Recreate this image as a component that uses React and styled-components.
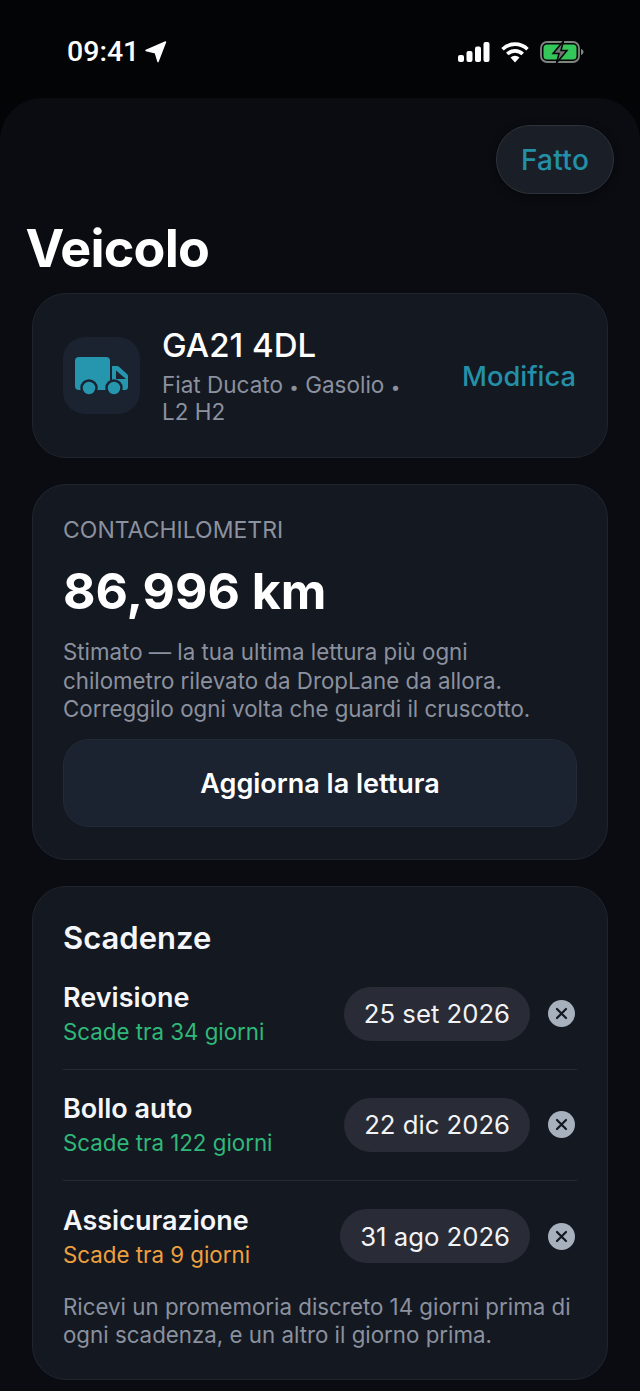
import React from "react";
import styled, { createGlobalStyle } from "styled-components";

const Global = createGlobalStyle`
  html, body { margin: 0; padding: 0; background: #030406; }
  body { font-family: Inter, "Liberation Sans", sans-serif; -webkit-font-smoothing: antialiased; }
  * { box-sizing: border-box; }
`;

const Page = styled.div`
  width: 640px;
  height: 1391px;
  overflow: hidden;
  background: #030406;
  display: flex;
  flex-direction: column;
`;

const StatusBar = styled.div`
  height: 98px;
  flex: none;
  display: flex;
  justify-content: space-between;
  align-items: flex-start;
  padding: 37px 56px 0 67px;
`;

const Clock = styled.div`
  display: flex;
  align-items: center;
  gap: 6px;
  color: #fff;
  font-family: Roboto, Inter, sans-serif;
  font-size: 28.5px;
  font-weight: 500;
  line-height: 30px;
`;

const StatusIcons = styled.div`
  display: flex;
  align-items: center;
  gap: 11px;
  height: 30px;
`;

const Sheet = styled.div`
  flex: 1;
  background: #0a0c11;
  border-radius: 42px 42px 0 0;
  padding: 27px 26px 0 26px;
`;

const TopRow = styled.div`
  display: flex;
  justify-content: flex-end;
`;

const DoneButton = styled.div`
  width: 118px;
  height: 69px;
  border-radius: 34px;
  background: #1a1e26;
  border: 1.5px solid #2e3239;
  color: #2390a8;
  font-size: 28px;
  font-weight: 500;
  letter-spacing: 0.3px;
  display: flex;
  align-items: center;
  justify-content: center;
  box-shadow: 0 2px 8px rgba(0, 0, 0, 0.4);
`;

const Title = styled.h1`
  margin: 25px 0 0 -0.5px;
  color: #fff;
  font-size: 52px;
  line-height: 60px;
  font-weight: 700;
  letter-spacing: -0.8px;
`;

const Stack = styled.div`
  margin: 14px 6px 0 6px;
  display: flex;
  flex-direction: column;
  gap: 26px;
`;

const Card = styled.section`
  background: #141821;
  border: 1.5px solid #20242d;
  border-radius: 34px;
  padding: ${(p) => p.$pad};
`;

const VehicleRow = styled.div`
  display: flex;
  align-items: center;
`;

const IconTile = styled.div`
  width: 77px;
  height: 77px;
  flex: none;
  border-radius: 22px;
  background: #1b2230;
  display: flex;
  align-items: center;
  justify-content: center;
  margin-right: 22px;
`;

const VehicleText = styled.div`
  flex: 1;
  min-width: 0;
`;

const Plate = styled.div`
  color: #fff;
  font-size: 33px;
  line-height: 38px;
  font-weight: 500;
`;

const VehicleMeta = styled.div`
  margin-top: 6.500px;
  width: 250px;
  color: #8b919e;
  font-size: 22.500px;
  line-height: 27.500px;
`;

const Dot = styled.span`
  font-size: 17px;
  line-height: 0;
`;

const EditLink = styled.div`
  color: #2390a8;
  font-size: 27.300px;
  font-weight: 500;
  line-height: 32px;
  margin: 2px 1px 0 0;
`;

const Overline = styled.div`
  color: #8b919e;
  font-size: 23px;
  line-height: 28px;
`;

const Reading = styled.div`
  margin-top: 17px;
  color: #fff;
  font-size: 50px;
  line-height: 60px;
  font-weight: 700;
`;

const Body = styled.p`
  margin: ${(p) => p.$margin};
  color: #8b919e;
  font-size: 22.300px;
  line-height: 28.500px;
`;

const PrimaryButton = styled.div`
  margin-top: 15.500px;
  height: 88px;
  border-radius: 26px;
  background: #1b2230;
  border: 1.5px solid #232936;
  color: #fff;
  font-size: 27px;
  font-weight: 600;
  display: flex;
  align-items: center;
  justify-content: center;
`;

const SectionTitle = styled.h2`
  margin: 0 0 2px;
  color: #f4f6fa;
  font-size: 31px;
  line-height: 38px;
  font-weight: 600;
`;

const DueRow = styled.div`
  height: 111px;
  display: flex;
  align-items: center;
  border-bottom: ${(p) => (p.$last ? "none" : "1.5px solid #262a33")};
`;

const DueText = styled.div`
  flex: 1;
  min-width: 0;
`;

const DueName = styled.div`
  color: #f4f6fa;
  font-size: 27px;
  line-height: 34px;
  font-weight: 600;
`;

const DueNote = styled.div`
  margin-top: 3px;
  color: ${(p) => p.$color};
  font-size: 22.300px;
  line-height: 28px;
`;

const DatePill = styled.div`
  height: 54px;
  padding: 0 20px;
  border-radius: 27px;
  background: #292c36;
  color: #f2f3f5;
  font-size: 25.700px;
  display: flex;
  align-items: center;
`;

const ClearButton = styled.div`
  width: 27px;
  height: 27px;
  margin: 0 2px 0 18px;
  border-radius: 50%;
  background: #a7b0bd;
  display: flex;
  align-items: center;
  justify-content: center;
`;

const Truck = () => (
  <svg width="54" height="38" viewBox="0 0 54 38">
    <path fill="#2596ae" d="M4 0h27a4 4 0 0 1 4 4v29H4a4 4 0 0 1-4-4V4a4 4 0 0 1 4-4z" />
    <path
      fill="#2596ae"
      fillRule="evenodd"
      d="M37 9h5a3 3 0 0 1 2 .8l8 7.200a3 3 0 0 1 1 2.200V30a3 3 0 0 1-3 3H37zM41 13.500V22h10z"
    />
    <circle cx="14" cy="31" r="7.500" fill="#2596ae" stroke="#1b2230" strokeWidth="2.500" />
    <circle cx="39" cy="31" r="7.500" fill="#2596ae" stroke="#1b2230" strokeWidth="2.500" />
  </svg>
);

const LocationArrow = () => (
  <svg width="22" height="22" viewBox="0 0 22 22">
    <path fill="#fff" stroke="#fff" strokeWidth="1.5" strokeLinejoin="round" d="M1 9.500 20.500 1 13 20.500l-2.600-8.700z" />
  </svg>
);

const Signal = () => (
  <svg width="32" height="20" viewBox="0 0 32 20">
    <rect x="0" y="13" width="6" height="7" rx="2" fill="#fff" />
    <rect x="8.500" y="9" width="6" height="11" rx="2" fill="#fff" />
    <rect x="17" y="4.500" width="6" height="15.500" rx="2" fill="#fff" />
    <rect x="25.500" y="0" width="6" height="20" rx="2" fill="#fff" />
  </svg>
);

const Wifi = () => (
  <svg width="28" height="21" viewBox="0 0 28 21">
    <path fill="none" stroke="#fff" strokeWidth="3.600" d="M1.500 7.200a18 18 0 0 1 25 0" />
    <path fill="none" stroke="#fff" strokeWidth="3.600" d="M6.300 12a11 11 0 0 1 15.400 0" />
    <path fill="#fff" d="M9.500 15.500a6.500 6.500 0 0 1 9 0L14 20.500z" />
  </svg>
);

const Battery = () => (
  <svg width="44" height="22" viewBox="0 0 44 22">
    <rect x="1" y="1" width="38" height="20" rx="6" fill="none" stroke="#7e8480" strokeWidth="1.800" />
    <rect x="3.500" y="3.500" width="33" height="15" rx="3.500" fill="#34c759" />
    <path d="M41 8v6c1.500-.4 2.500-1.600 2.500-3s-1-2.600-2.500-3z" fill="#7e8480" />
    <path
      fill="#6f7472"
      stroke="#030406"
      strokeWidth="1.500"
      d="M23.500 0 13 12.500h6L16.500 22 27 9.500h-6z"
    />
  </svg>
);

const CloseGlyph = () => (
  <svg width="13" height="13" viewBox="0 0 13 13">
    <path d="M2 2l9 9M11 2l-9 9" stroke="#141821" strokeWidth="2.200" strokeLinecap="round" />
  </svg>
);

const dues = [
  { name: "Revisione", note: "Scade tra 34 giorni", color: "#30b87a", date: "25 set 2026" },
  { name: "Bollo auto", note: "Scade tra 122 giorni", color: "#30b87a", date: "22 dic 2026" },
  { name: "Assicurazione", note: "Scade tra 9 giorni", color: "#efa03f", date: "31 ago 2026" },
];

export default function App() {
  return (
    <Page>
      <Global />
      <StatusBar>
        <Clock>
          09:41
          <LocationArrow />
        </Clock>
        <StatusIcons>
          <Signal />
          <Wifi />
          <Battery />
        </StatusIcons>
      </StatusBar>
      <Sheet>
        <TopRow>
          <DoneButton>Fatto</DoneButton>
        </TopRow>
        <Title>Veicolo</Title>
        <Stack>
          <Card $pad="32px 30px 31.500px">
            <VehicleRow>
              <IconTile>
                <Truck />
              </IconTile>
              <VehicleText>
                <Plate>GA21 4DL</Plate>
                <VehicleMeta>
                  Fiat Ducato <Dot>•</Dot> Gasolio <Dot>•</Dot> L2 H2
                </VehicleMeta>
              </VehicleText>
              <EditLink>Modifica</EditLink>
            </VehicleRow>
          </Card>
          <Card $pad="31px 30px 31.500px">
            <Overline>CONTACHILOMETRI</Overline>
            <Reading>86,996 km</Reading>
            <Body $margin="17px 0 0 0">
              Stimato — la tua ultima lettura più ogni chilometro rilevato da DropLane da allora.
              Correggilo ogni volta che guardi il cruscotto.
            </Body>
            <PrimaryButton>Aggiorna la lettura</PrimaryButton>
          </Card>
          <Card $pad="32px 30px 29px">
            <SectionTitle>Scadenze</SectionTitle>
            {dues.map((d, i) => (
              <DueRow key={d.name} $last={i === dues.length - 1}>
                <DueText>
                  <DueName>{d.name}</DueName>
                  <DueNote $color={d.color}>{d.note}</DueNote>
                </DueText>
                <DatePill>{d.date}</DatePill>
                <ClearButton>
                  <CloseGlyph />
                </ClearButton>
              </DueRow>
            ))}
            <Body $margin="1px 0 0 0">
              Ricevi un promemoria discreto 14 giorni prima di ogni scadenza, e un altro il giorno
              prima.
            </Body>
          </Card>
        </Stack>
      </Sheet>
    </Page>
  );
}
